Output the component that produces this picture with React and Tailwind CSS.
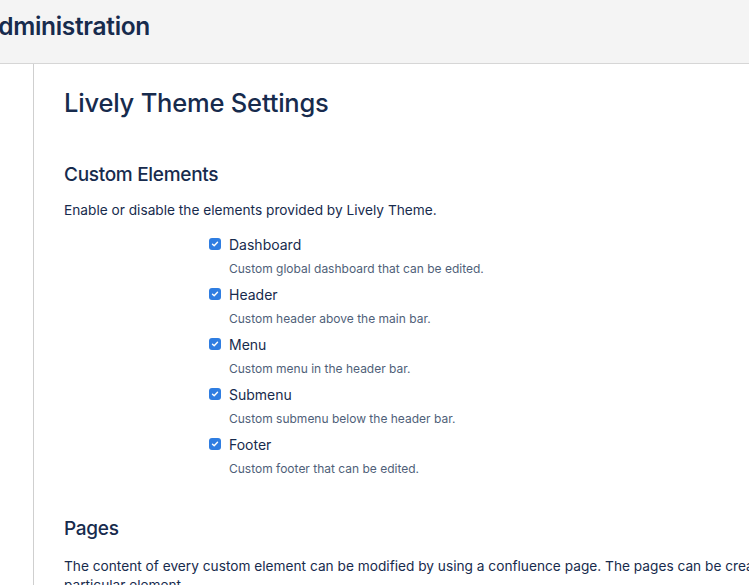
import React from "react";

const elements = [
  { name: "Dashboard", desc: "Custom global dashboard that can be edited." },
  { name: "Header", desc: "Custom header above the main bar." },
  { name: "Menu", desc: "Custom menu in the header bar." },
  { name: "Submenu", desc: "Custom submenu below the header bar." },
  { name: "Footer", desc: "Custom footer that can be edited." },
];

function Check() {
  return (
    <span className="w-[12px] h-[12px] rounded-[3px] bg-[#2f7de1] flex items-center justify-center shrink-0">
      <svg width="8" height="8" viewBox="0 0 8 8" fill="none">
        <path d="M1.5 4.2 L3.2 5.8 L6.5 2.2" stroke="white" strokeWidth="1.4" strokeLinecap="round" strokeLinejoin="round" />
      </svg>
    </span>
  );
}

export default function App() {
  return (
    <div className="w-[749px] h-[585px] overflow-hidden bg-white text-[#172b4d] font-['Inter',sans-serif]">
      {/* Header */}
      <div className="h-[64px] bg-[#f4f4f4] border-b border-[#d6d6d6] flex items-center overflow-hidden">
        <h1 className="ml-[-19px] text-[24.5px] font-semibold tracking-[-0.3px] leading-none pb-[10px] whitespace-nowrap">
          Administration
        </h1>
      </div>

      <div className="flex h-full">
        <div className="w-[34px] shrink-0 border-r border-[#cfcfcf]" />
        <div className="pl-[30px] pt-[24px] whitespace-nowrap">
          <h2 className="text-[25.5px] font-medium leading-[30px] tracking-[-0.2px]">
            Lively Theme Settings
          </h2>

          <h3 className="mt-[45px] text-[19px] font-medium leading-[24px] tracking-[-0.3px]">
            Custom Elements
          </h3>
          <p className="mt-[13px] text-[13.7px] leading-[20px]">
            Enable or disable the elements provided by Lively Theme.
          </p>

          <div className="mt-[14px] ml-[145px] flex flex-col">
            {elements.map((el) => (
              <div key={el.name} className="h-[50px]">
                <div className="flex items-center gap-[8px] h-[20px]">
                  <Check />
                  <span className="text-[14px] text-[#172b4d]">{el.name}</span>
                </div>
                <div className="ml-[20px] mt-[7px] text-[12px] leading-[16px] text-[#505f79]">
                  {el.desc}
                </div>
              </div>
            ))}
          </div>

          <h3 className="mt-[33px] text-[19px] font-medium leading-[24px] tracking-[-0.3px]">
            Pages
          </h3>
          <p className="mt-[16px] text-[13.7px] leading-[19px]">
            The content of every custom element can be modified by using a confluence page. The pages can be created
            <br />
            particular element.
          </p>
        </div>
      </div>
    </div>
  );
}
